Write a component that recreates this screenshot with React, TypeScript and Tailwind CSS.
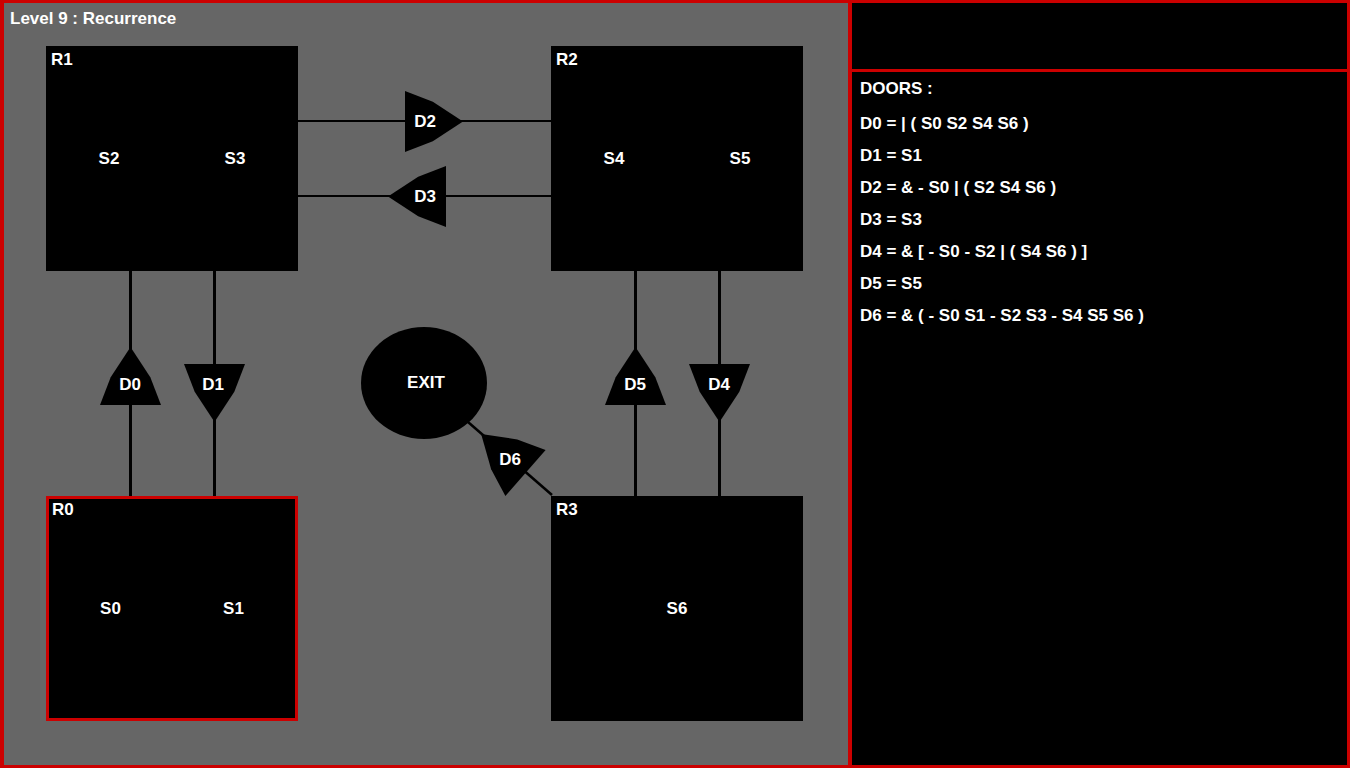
import React from 'react';

const FONT = { fontFamily: '"Liberation Sans", Arial, sans-serif' };

type Door = { id: string; bx: number; by: number; dx: number; dy: number; L?: number; tx: number; ty: number };

const doors: Door[] = [
  { id: 'D0', bx: 130.5, by: 405, dx: 0, dy: -1, tx: 130, ty: 390 },
  { id: 'D1', bx: 214.5, by: 364, dx: 0, dy: 1, tx: 213, ty: 390 },
  { id: 'D2', bx: 405, by: 121.5, dx: 1, dy: 0, tx: 425, ty: 127 },
  { id: 'D3', bx: 446, by: 196.5, dx: -1, dy: 0, tx: 425, ty: 202 },
  { id: 'D4', bx: 719.5, by: 364, dx: 0, dy: 1, tx: 719, ty: 390 },
  { id: 'D5', bx: 635.5, by: 405, dx: 0, dy: -1, tx: 635, ty: 390 },
  { id: 'D6', bx: 525.5, by: 473, dx: -0.752, dy: -0.659, L: 59, tx: 510, ty: 465 },
];

// door shape: straight base, sides with one kink on the way to the tip
function doorPath({ bx, by, dx, dy, L = 58 }: Door) {
  const H = 30.5;
  const nx = -dy;
  const ny = dx;
  const pt = (a: number, b: number) => `${bx + a * dx + b * nx},${by + a * dy + b * ny}`;
  return `M${pt(0, H)} L${pt(0.48 * L, 0.65 * H)} L${pt(L, 0)} L${pt(0.48 * L, -0.65 * H)} L${pt(0, -H)} Z`;
}

const formulas = [
  'D0 = | ( S0 S2 S4 S6 )',
  'D1 = S1',
  'D2 = & - S0 | ( S2 S4 S6 )',
  'D3 = S3',
  'D4 = & [ - S0 - S2 | ( S4 S6 ) ]',
  'D5 = S5',
  'D6 = & ( - S0 S1 - S2 S3 - S4 S5 S6 )',
];

function Room({ name, switches, className, current }: { name: string; switches: string[]; className: string; current?: boolean }) {
  return (
    <div
      className={`absolute w-[252px] h-[225px] bg-black ${current ? 'border-[3px] border-[#cc0000]' : ''} ${className}`}
    >
      <div className={`absolute ${current ? 'top-[2px] left-[3px]' : 'top-[5px] left-[5px]'} leading-[17px]`}>{name}</div>
      <div className={`h-full grid items-center justify-items-center ${switches.length > 1 ? 'grid-cols-2' : 'grid-cols-1'}`}>
        {switches.map((s) => (
          <span key={s} className="leading-[17px]">
            {s}
          </span>
        ))}
      </div>
    </div>
  );
}

export default function App() {
  return (
    <div
      className="w-[1350px] h-[768px] bg-[#cc0000] pl-[4px] pt-[3px] pr-[3px] pb-[3px] flex gap-[4px] text-white font-bold text-[17px]"
      style={FONT}
    >
      {/* Level canvas */}
      <div className="relative w-[844px] h-full bg-[#666666] shrink-0">
        <div className="absolute left-[6px] top-[7px] leading-[17px]">Level 9 : Recurrence</div>

        <svg className="absolute inset-0" width={844} height={762} viewBox="4 3 844 762">
          <g stroke="black" fill="none">
            <line x1={298} y1={121} x2={551} y2={121} strokeWidth={2} />
            <line x1={298} y1={196} x2={551} y2={196} strokeWidth={2} />
            <line x1={130.5} y1={271} x2={130.5} y2={496} strokeWidth={3} />
            <line x1={214.5} y1={271} x2={214.5} y2={496} strokeWidth={3} />
            <line x1={635.5} y1={271} x2={635.5} y2={496} strokeWidth={3} />
            <line x1={719.5} y1={271} x2={719.5} y2={496} strokeWidth={3} />
            <line x1={468} y1={422} x2={552} y2={495} strokeWidth={2.5} />
          </g>
          <ellipse cx={424} cy={383} rx={63} ry={56} fill="black" />
          <text x={426} y={388} textAnchor="middle" fill="white" fontSize={17} fontWeight={700} style={FONT}>
            EXIT
          </text>
          {doors.map((d) => (
            <g key={d.id}>
              <path d={doorPath(d)} fill="black" />
              <text x={d.tx} y={d.ty} textAnchor="middle" fill="white" fontSize={17} fontWeight={700} style={FONT}>
                {d.id}
              </text>
            </g>
          ))}
        </svg>

        <Room name="R1" switches={['S2', 'S3']} className="left-[42px] top-[43px]" />
        <Room name="R2" switches={['S4', 'S5']} className="left-[547px] top-[43px]" />
        <Room name="R0" switches={['S0', 'S1']} className="left-[42px] top-[493px]" current />
        <Room name="R3" switches={['S6']} className="left-[547px] top-[493px]" />
      </div>

      {/* Side panel */}
      <div className="flex-1 flex flex-col gap-[3px]">
        <div className="h-[66px] bg-black" />
        <div className="flex-1 bg-black pt-[8px] pl-[8px]">
          <div className="leading-[17px]">DOORS :</div>
          <ul className="mt-[11px]">
            {formulas.map((f) => (
              <li key={f} className="leading-[32px] whitespace-pre">
                {f}
              </li>
            ))}
          </ul>
        </div>
      </div>
    </div>
  );
}
